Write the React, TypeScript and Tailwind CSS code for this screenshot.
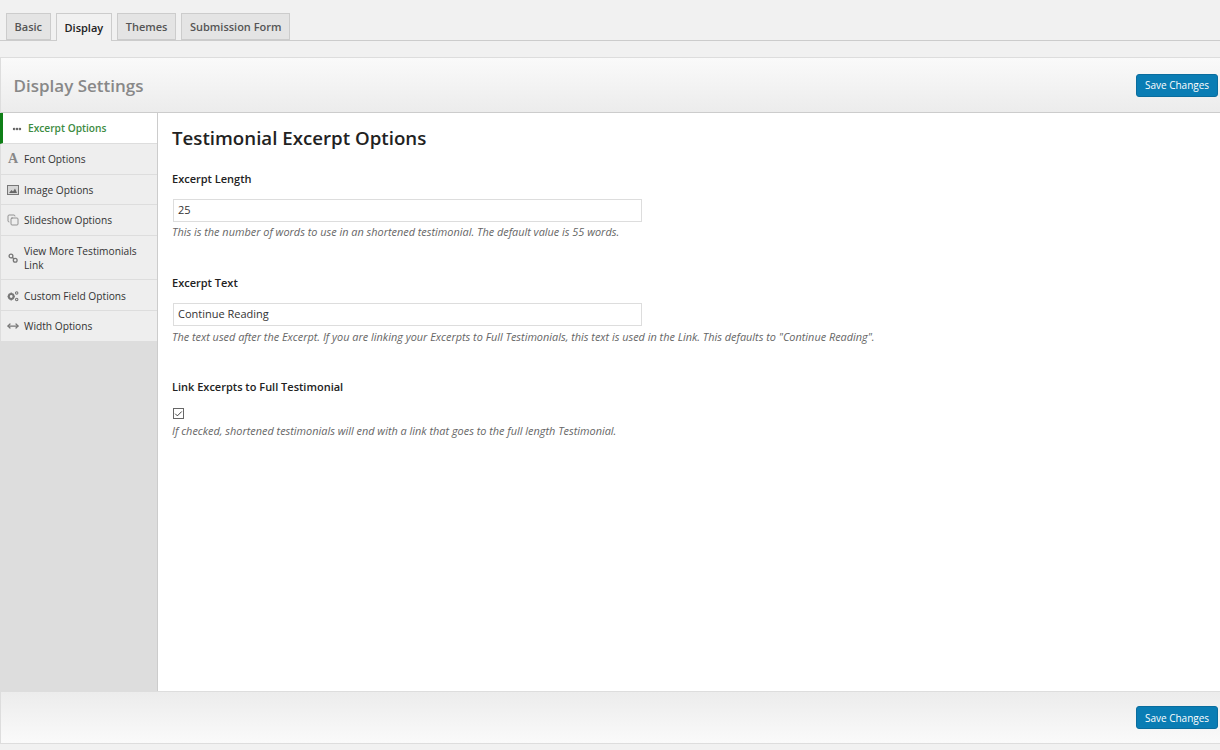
import { Check, Copy, MoreHorizontal, MoveHorizontal } from "lucide-react";

const font = { fontFamily: '"Open Sans", sans-serif' };

const tabs = ["Basic", "Display", "Themes", "Submission Form"];

const menu = [
  { label: "Font Options", icon: "font", h: "h-[31px]" },
  { label: "Image Options", icon: "image", h: "h-[30px]" },
  { label: "Slideshow Options", icon: "copy", h: "h-[31px]" },
  { label: "View More Testimonials Link", icon: "link", h: "h-[44px]" },
  { label: "Custom Field Options", icon: "cogs", h: "h-[31px] pt-[1px]" },
  { label: "Width Options", icon: "width", h: "h-[31px]" },
];

const MenuIcon = ({ name }: { name: string }) => {
  if (name === "font") {
    return (
      <span className="w-[12px] text-center text-[14px] leading-none font-bold text-[#888]" style={{ fontFamily: '"Liberation Serif", serif' }}>
        A
      </span>
    );
  }
  if (name === "image") {
    return (
      <svg viewBox="0 0 12 10" className="w-[12px] h-[10px]">
        <rect x="0.5" y="0.5" width="11" height="9" fill="#d6d6d6" stroke="#777" />
        <path d="M2 8l2.5-3 1.5 1.5L8 3.5 10 8z" fill="#666" />
      </svg>
    );
  }
  if (name === "copy") return <Copy className="w-[12px] h-[12px] text-[#777]" strokeWidth={1.5} />;
  if (name === "link") {
    return (
      <svg viewBox="0 0 12 12" className="w-[12px] h-[12px]" fill="none" stroke="#777" strokeWidth="1.3">
        <circle cx="4" cy="4" r="1.9" />
        <circle cx="8.2" cy="8.2" r="1.9" />
        <path d="M5.3 5.3l1.6 1.6" />
      </svg>
    );
  }
  if (name === "cogs") {
    return (
      <svg viewBox="0 0 12 12" className="w-[12px] h-[12px]" fill="none" stroke="#777">
        <circle cx="4.2" cy="6.5" r="2.4" strokeWidth="2" />
        <path d="M4.2 2.4v1M4.2 9.6v1M.6 6.5h1M6.8 6.5h1" strokeWidth="1.3" />
        <circle cx="9.7" cy="3" r="1.2" strokeWidth="1.1" />
        <circle cx="9.7" cy="9.5" r="1.2" strokeWidth="1.1" />
      </svg>
    );
  }
  return <MoveHorizontal className="w-[12px] h-[12px] text-[#777]" strokeWidth={2.5} />;
};

const SaveButton = () => (
  <button className="w-[82px] h-[23px] rounded-[3px] bg-[#0a7db4] border border-[#0a6d9e] text-white text-[10px] leading-none">
    Save Changes
  </button>
);

const Field = ({ label, value, help, top, helpTop }: { label: string; value: string; help: string; top: string; helpTop: string }) => (
  <div className={top}>
    <div className="text-[11px] leading-[16px] font-semibold text-[#222]">{label}</div>
    <div className="mt-[12px] ml-[1px] w-[469px] h-[23px] bg-white border border-[#ddd] px-[4px] flex items-center text-[11px] text-[#333]">
      {value}
    </div>
    <p className={`${helpTop} text-[10.9px] leading-[16px] italic text-[#666]`}>{help}</p>
  </div>
);

export default function App() {
  return (
    <div className="h-[750px] overflow-hidden bg-[#f1f1f1] text-[#444]" style={font}>
      <div className="h-[41px] pt-[13px] pl-[6px] flex gap-[5.5px] border-b border-[#ccc]">
        {tabs.map((t) => (
          <div
            key={t}
            className={
              t === "Display"
                ? "h-[28px] pt-[1px] px-[7.5px] flex items-center bg-[#f1f1f1] border border-[#ccc] border-b-0 text-[11px] font-semibold text-[#222]"
                : "h-[27px] pt-[1px] px-[7.5px] flex items-center bg-[#e4e4e4] border border-[#ccc] text-[11px] font-semibold text-[#555]"
            }
          >
            {t}
          </div>
        ))}
      </div>

      <div className="mt-[16px] h-[687px] flex flex-col border-t border-l border-[#ddd]">
        <div className="h-[55px] shrink-0 flex items-center justify-between pl-[12.5px] pr-[2px] bg-gradient-to-b from-[#fafafa] to-[#ececec] border-b border-[#ccc]">
          <h1 className="pt-[1px] text-[17px] font-semibold text-[#888]">Display Settings</h1>
          <SaveButton />
        </div>

        <div className="flex-1 flex min-h-0">
          <div className="w-[157px] shrink-0 bg-[#ddd] border-r border-[#ccc]">
            <div className="h-[31px] pt-[1px] flex items-center gap-[6px] pl-[9px] bg-white border-b border-[#ddd] border-l-[3px] border-l-[#0f7f17] -ml-[1px] text-[10.2px] font-semibold text-[#3d8b42]">
              <MoreHorizontal className="w-[10px] h-[10px] text-[#555]" strokeWidth={4} />
              <span>Excerpt Options</span>
            </div>
            {menu.map((m) => (
              <div key={m.label} className={`${m.h} flex items-center gap-[5px] pl-[6px] pr-[14px] bg-[#eee] border-b border-[#ddd] text-[10.2px] leading-[14px] text-[#333]`}>
                <span className="shrink-0 flex items-center"><MenuIcon name={m.icon} /></span>
                <span>{m.label}</span>
              </div>
            ))}
          </div>

          <div className="flex-1 bg-white pl-[14px] pt-[12px]">
            <h2 className="text-[18.7px] leading-[25px] font-semibold text-[#222]">Testimonial Excerpt Options</h2>
            <Field
              top="mt-[21px]"
              helpTop="mt-[2px]"
              label="Excerpt Length"
              value="25"
              help="This is the number of words to use in an shortened testimonial. The default value is 55 words."
            />
            <Field
              top="mt-[35px]"
              helpTop="mt-[3px]"
              label="Excerpt Text"
              value="Continue Reading"
              help={'The text used after the Excerpt. If you are linking your Excerpts to Full Testimonials, this text is used in the Link. This defaults to "Continue Reading".'}
            />
            <div className="mt-[34px]">
              <div className="text-[11px] leading-[16px] font-semibold text-[#222]">Link Excerpts to Full Testimonial</div>
              <div className="mt-[13px] ml-[1px] w-[11px] h-[11px] border border-[#666] flex items-center justify-center">
                <Check className="w-[10px] h-[10px] text-[#333]" strokeWidth={2.5} />
              </div>
              <p className="mt-[4px] text-[10.9px] leading-[16px] italic text-[#666]">
                If checked, shortened testimonials will end with a link that goes to the full length Testimonial.
              </p>
            </div>
          </div>
        </div>

        <div className="h-[53px] shrink-0 flex items-center justify-end pr-[2px] bg-gradient-to-b from-[#ececec] to-[#fafafa] border-t border-b border-[#ddd]">
          <SaveButton />
        </div>
      </div>
    </div>
  );
}
